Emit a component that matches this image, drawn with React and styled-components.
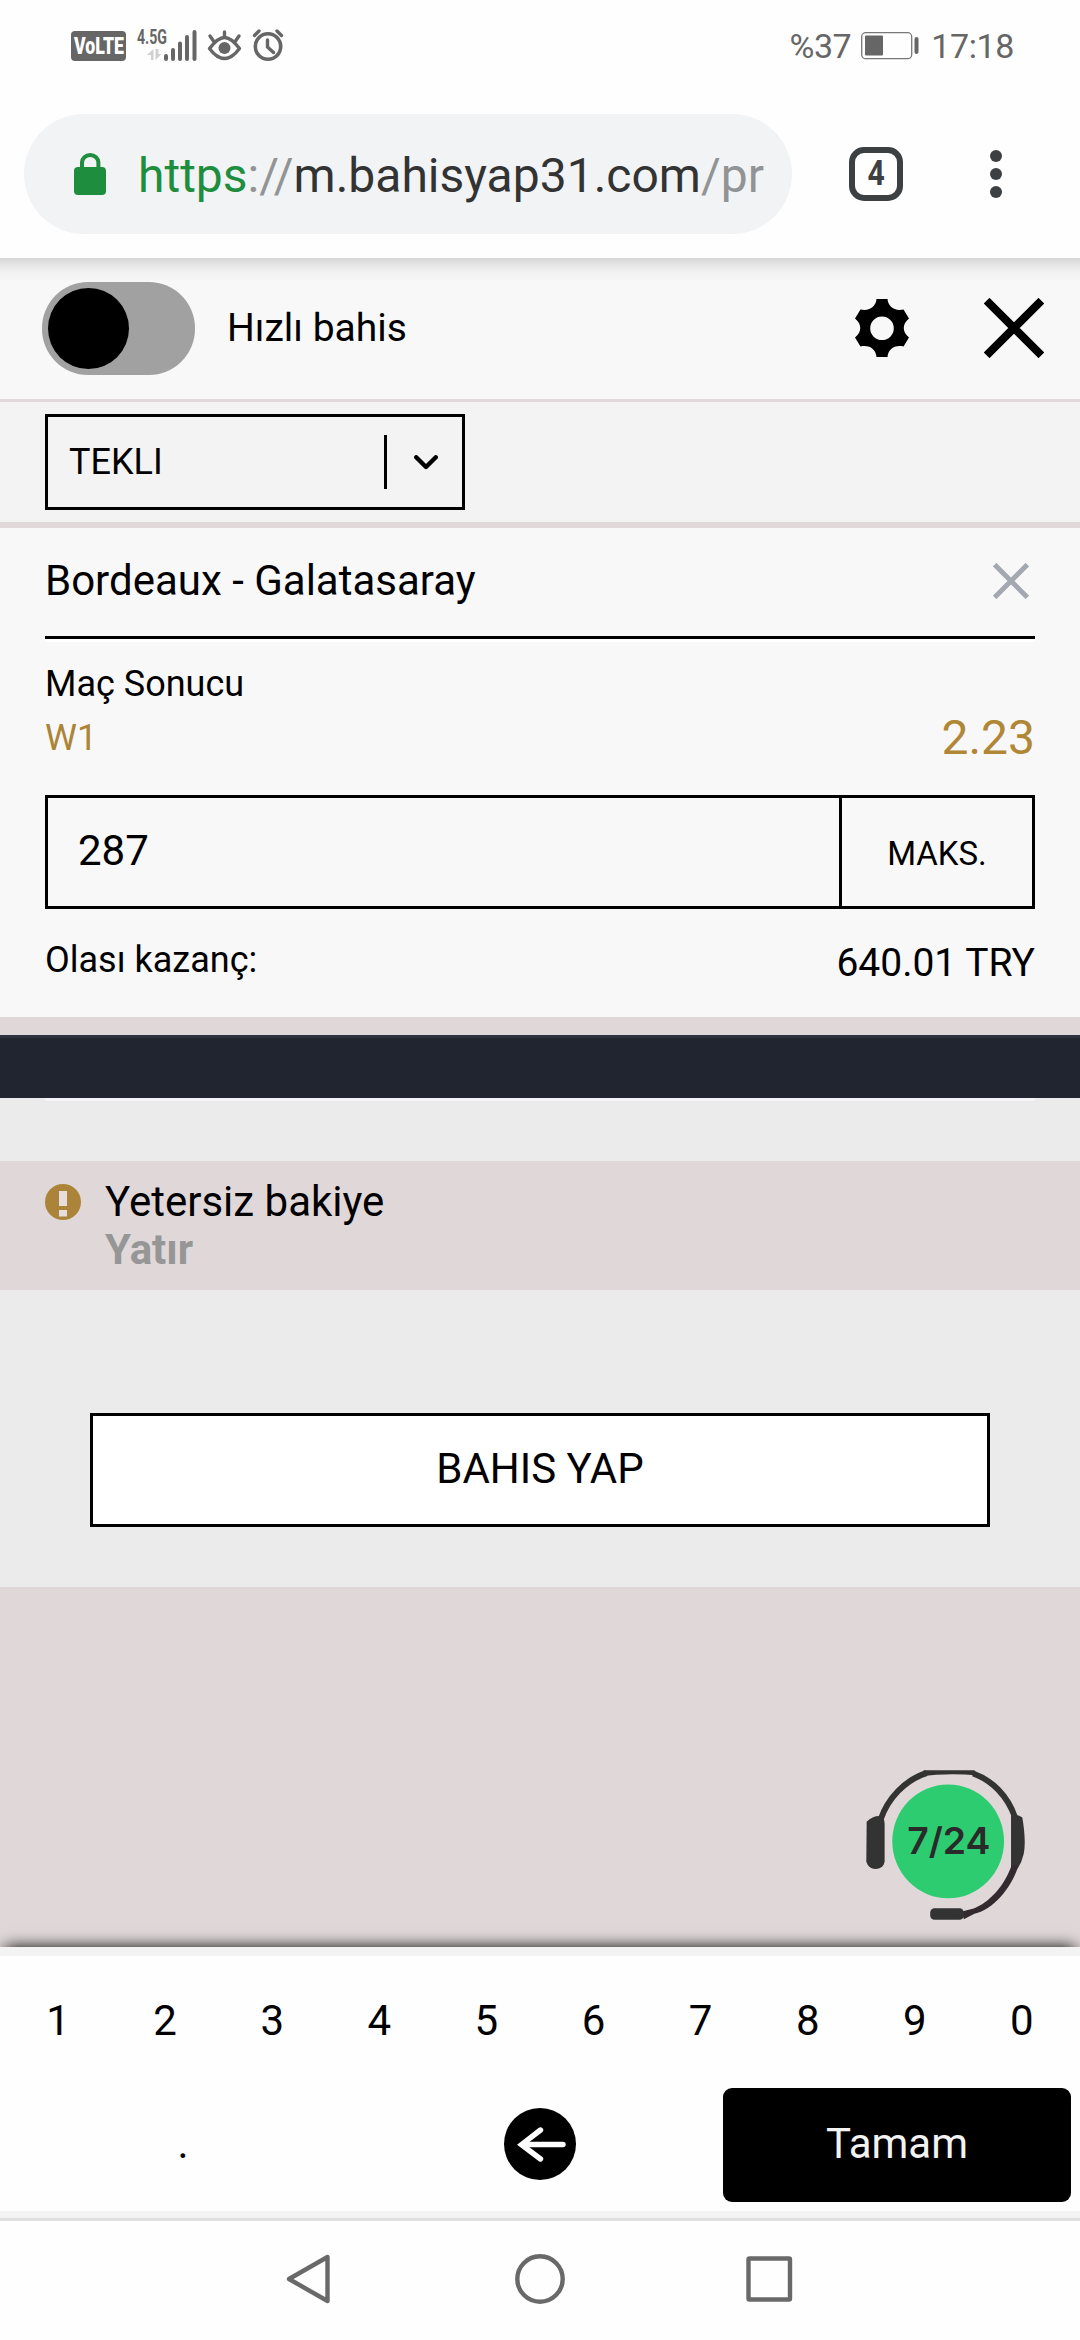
import React from 'react';
import styled, { createGlobalStyle } from 'styled-components';

const GlobalStyle = createGlobalStyle`
    * {
        box-sizing: border-box;
    }
    body {
        margin: 0;
        background-color: #fefefe;
        color: #000;
        font-family: Roboto, 'Liberation Sans', sans-serif;
        font-size: 42px;
    }
    button {
        margin: 0;
        padding: 0;
        border: 0;
        background: none;
        color: inherit;
        font-family: inherit;
    }
    svg {
        display: block;
        flex: none;
    }
`;

const Page = styled.div`
    display: flex;
    flex-direction: column;
    width: 1080px;
    height: 2340px;
    overflow: hidden;
    background-color: #e0d8d8;
`;

/* phone status bar */

const StatusBar = styled.div`
    display: flex;
    justify-content: space-between;
    height: 92px;
    padding: 0 66px 0 70px;
    background-color: #fefefe;
    color: #666;
`;

const StatusRight = styled.div`
    display: flex;
    align-items: center;
    height: 92px;
    font-size: 34px;
    line-height: 92px;
`;

const Clock = styled.span`
    letter-spacing: -0.4px;
`;

/* browser bar */

const BrowserBar = styled.div`
    display: flex;
    align-items: center;
    height: 166px;
    padding: 0 78px 2px 24px;
    background-color: #fefefe;
`;

const AddressPill = styled.div`
    display: flex;
    align-items: center;
    width: 768px;
    height: 120px;
    padding: 0 29px 0 50px;
    border-radius: 60px;
    background-color: #f1f3f4;
`;

const Url = styled.div`
    flex: 1;
    margin-left: 32px;
    padding-top: 3px;
    white-space: nowrap;
    font-size: 48px;
    line-height: 64px;
    color: #333;
`;

const UrlPart = styled.span`
    color: ${props => props.$secure ? '#1e8e3e' : '#919395'};
`;

const TabCount = styled.button`
    display: flex;
    align-items: center;
    justify-content: center;
    width: 54px;
    height: 54px;
    margin-left: 57px;
    border: 6px solid #3c4043;
    border-radius: 15px;
    color: #3c4043;
`;

const TabNumber = styled.span`
    font-size: 35px;
    font-weight: 700;
    line-height: 42px;
    transform: scaleX(0.86);
`;

const MenuDots = styled.button`
    display: flex;
    flex-direction: column;
    gap: 6px;
    margin-left: 87px;
`;

const Dot = styled.span`
    width: 12px;
    height: 12px;
    border-radius: 50%;
    background-color: #3c4043;
`;

/* bet slip */

const SlipHeader = styled.div`
    display: flex;
    align-items: center;
    height: 144px;
    padding: 0 36px 0 42px;
    border-bottom: 3px solid #e0d8d9;
    background: #f8f8f8 linear-gradient(#d6d6d6, #e4e4e4 6px, #f1f1f1 14px, #f8f8f8 24px);
`;

const Toggle = styled.div`
    width: 153px;
    height: 93px;
    padding: 6px;
    border-radius: 46px;
    background-color: #a1a1a1;
`;

const Knob = styled.div`
    width: 81px;
    height: 81px;
    border-radius: 50%;
    background-color: #000;
`;

const ToggleLabel = styled.div`
    flex: 1;
    margin-left: 32px;
    padding-bottom: 2px;
    font-size: 39px;
    line-height: 48px;
`;

const IconButton = styled.button`
    margin-left: ${props => props.$gap || 0}px;
    padding-bottom: ${props => props.$lift || 0}px;
`;

const TypeRow = styled.div`
    height: 126px;
    padding: 12px 45px 0;
    border-bottom: 6px solid #e0d8d9;
    background-color: #f3f3f3;
`;

const Select = styled.div`
    display: flex;
    align-items: center;
    width: 420px;
    height: 96px;
    padding: 0 24px 0 21px;
    border: 3px solid #000;
    font-size: 36px;
`;

const SelectValue = styled.span`
    flex: 1;
`;

const SelectArrow = styled.span`
    display: flex;
    align-items: center;
    height: 54px;
    padding-left: 27px;
    border-left: 3px solid #000;
`;

const Card = styled.div`
    height: 489px;
    padding: 0 45px;
    background-color: #f8f8f8;
`;

const MatchRow = styled.div`
    display: flex;
    align-items: center;
    justify-content: space-between;
    height: 111px;
    padding: 0 6px 3px 0;
    border-bottom: 3px solid #000;
    box-shadow: 0 3px 0 #fff;
`;

const Market = styled.div`
    padding-top: 18px;
    font-size: 36px;
    line-height: 54px;
`;

const Pick = styled.div`
    display: flex;
    justify-content: space-between;
    color: #ab8437;
`;

const Odds = styled.span`
    color: #b08736;
    font-size: 48px;
`;

const StakeBox = styled.div`
    display: flex;
    height: 114px;
    margin-top: 30px;
    border: 3px solid #000;
`;

const StakeInput = styled.input`
    flex: 1;
    min-width: 0;
    padding: 0 30px 3px;
    border: 0;
    outline: 0;
    background: none;
    color: #000;
    font-family: inherit;
    font-size: 42px;
`;

const MaxButton = styled.button`
    width: 193px;
    padding-top: 3px;
    border-left: 3px solid #000;
    font-size: 33px;
`;

const PayoutRow = styled.div`
    display: flex;
    justify-content: space-between;
    padding-top: 27px;
    font-size: 36px;
    line-height: 48px;
`;

const Payout = styled.span`
    padding-top: 3px;
    font-size: 39px;
`;

const Divider = styled.div`
    height: 63px;
    margin-top: 18px;
    border-top: 3px solid #2e323e;
    background-color: #212530;
`;

const Summary = styled.div`
    background-color: #ebebeb;
`;

const SummaryTop = styled.div`
    height: 63px;
    margin: 0 45px;
    border-top: 3px solid #f5f3f8;
`;

const Alert = styled.div`
    display: flex;
    align-items: flex-start;
    gap: 24px;
    height: 129px;
    padding: 17px 45px 0;
    background-color: #e0d8d8;
    line-height: 48px;

    svg {
        margin-top: 6px;
    }
`;

const DepositLink = styled.div`
    color: #969696;
    font-weight: 700;
`;

const SubmitArea = styled.div`
    padding: 123px 90px 60px;
`;

const SubmitButton = styled.button`
    width: 100%;
    height: 114px;
    padding-bottom: 3px;
    border: 3px solid #000;
    background-color: #fff;
    font-size: 42px;
`;

const Spacer = styled.div`
    position: relative;
    flex: 1;
`;

const SupportBadge = styled.div`
    position: absolute;
    right: 53px;
    bottom: 27px;
`;

/* number pad */

const Keypad = styled.div`
    display: flex;
    flex-direction: column;
    gap: 9px;
    height: 271px;
    padding: 9px;
    border-top: 9px solid #f3f3f3;
    border-bottom: 7px solid #f3f3f3;
    background-color: #fefefe;
    box-shadow: 0 -5px 15px -5px #000;
    clip-path: inset(-30px 0 0 0);
`;

const KeyRow = styled.div`
    display: flex;
    gap: 9px;
    height: 114px;
`;

const Key = styled.button`
    display: flex;
    flex: 1;
    align-items: center;
    justify-content: center;
    padding-bottom: 3px;
    border-radius: 9px;
    background-color: ${props => props.$primary ? '#000' : 'transparent'};
    color: ${props => props.$primary ? '#f3f3f3' : '#000'};
    font-size: 42px;
`;

const NavBar = styled.div`
    display: flex;
    align-items: center;
    justify-content: center;
    gap: 180px;
    height: 122px;
    padding-bottom: 3px;
    border-top: 3px solid #dfdfdf;
    background-color: #fefefe;
`;

const keys = ['1', '2', '3', '4', '5', '6', '7', '8', '9', '0'];

const StatusIcons = () => (
    <svg width="220" height="92" viewBox="70 0 220 92" fill="none" stroke="#666">
        <rect x="71" y="31" width="55" height="30" rx="4" fill="#666" stroke="none" />
        <text x="74" y="54" fontSize="23" fontWeight="900" fill="#fff" stroke="none" textLength="50" lengthAdjust="spacingAndGlyphs">VoLTE</text>
        <text x="137" y="43.5" fontSize="20" fontWeight="700" fill="#666" stroke="none" textLength="30" lengthAdjust="spacingAndGlyphs">4.5G</text>
        <path d="M153.500 60V49l-6.500 6h4v5zM155.500 49v11l6-6h-3v-5z" fill="#d0d0d0" stroke="none" />
        <path d="M166 56v3M173 50v9M180 43.500v15.500M187 37v22M194.500 32v27" strokeWidth="4" strokeLinecap="round" />
        <path d="M209.500 48.500C216 40 220 37.500 224.500 37.500S233 40 239.500 48.500C234 56 229.500 58.500 224.500 58.500S215 56 209.500 48.500Z" strokeWidth="3.400" strokeLinejoin="round" />
        <circle cx="224.500" cy="48" r="6" fill="#666" stroke="none" />
        <path d="M224.500 32v5M210 36l3.500 5M239 36l-3.500 5" strokeWidth="3.400" strokeLinecap="round" />
        <circle cx="268" cy="46.500" r="12.700" strokeWidth="3.600" />
        <path d="M267.500 40v7l6 5.500M254.500 35.500l4.500-4.500M281.500 35.500l-4.500-4.500" strokeWidth="3.400" strokeLinecap="round" />
    </svg>
);

const BatteryIcon = () => (
    <svg width="80" height="32" viewBox="852 30 80 32" fill="#666">
        <rect x="862.700" y="32.700" width="50" height="26" rx="4" fill="none" stroke="#777" strokeWidth="1.300" />
        <rect x="866" y="35.500" width="18" height="20" rx="1" />
        <rect x="915.500" y="37" width="4" height="17" rx="2" />
    </svg>
);

const LockIcon = () => (
    <svg width="32" height="42" viewBox="0 0 32 42">
        <path d="M8 16V9.500a8.200 7.500 0 0 1 16.400 0V16" fill="none" stroke="#1e8e3e" strokeWidth="4" />
        <rect y="14" width="32" height="28" rx="4" fill="#1e8e3e" />
    </svg>
);

const GearIcon = () => (
    <svg width="54" height="58" viewBox="0 0 54 58">
        <path
            d="M21.500 0h11C33 7 39 12.500 48.500 10.500L54 19.500C47 25 47 33 54 38.500L48.500 47.500C39 45.500 33 51 32.500 58h-11C21 51 15 45.500 5.500 47.500L0 38.500C7 33 7 25 0 19.500L5.500 10.500C15 12.500 21 7 21.500 0ZM27 17.500a11.800 11.800 0 1 0 0 23.600a11.800 11.800 0 1 0 0-23.600Z"
            fillRule="evenodd"
        />
    </svg>
);

const CrossIcon = ({ size, color, weight }) => (
    <svg width={size} height={size} viewBox={`0 0 ${size} ${size}`}>
        <path
            d={`M${weight / 3} ${weight / 3}L${size - weight / 3} ${size - weight / 3}M${size - weight / 3} ${weight / 3}L${weight / 3} ${size - weight / 3}`}
            stroke={color}
            strokeWidth={weight}
        />
    </svg>
);

const ChevronIcon = () => (
    <svg width="24" height="15" viewBox="0 0 24 15">
        <path d="M2.200 2.300L12 12L21.800 2.300" fill="none" stroke="#000" strokeWidth="4.400" strokeLinecap="round" strokeLinejoin="round" />
    </svg>
);

const WarningIcon = () => (
    <svg width="36" height="36" viewBox="0 0 36 36">
        <circle cx="18" cy="18" r="18" fill="#ab8439" />
        <path d="M14 7h8v15h-8zM14 26h8v6.500h-8z" fill="#e6dedc" />
    </svg>
);

const HeadsetIcon = () => (
    <svg width="163" height="150" viewBox="190 120 490 450">
        <path d="M240 268C262 205 312 150 378 129M518 130C575 150 622 198 644 262" fill="none" stroke="#333" strokeWidth="18" />
        <path d="M370 120H522L532 136Q445 128 360 138Z" fill="#333" />
        <path d="M198 275Q215 258 236 258Q252 260 252 280V395Q248 417 224 417Q204 417 197 395Z" fill="#333" />
        <path d="M632 258Q650 250 666 262Q678 335 670 372Q664 398 652 416L632 418Z" fill="#333" />
        <path d="M654 408C632 476 580 538 522 552L490 568L484 545L520 536C565 518 612 470 634 405Z" fill="#332a30" />
        <rect x="389" y="535" width="101" height="35" rx="13" fill="#333" />
        <ellipse cx="443" cy="334" rx="168" ry="171" fill="#2ecc71" />
        <text x="320" y="373" fontFamily="Inter, sans-serif" fontSize="110" fontWeight="600" fill="#2a2a2a" textLength="250" lengthAdjust="spacingAndGlyphs">7/24</text>
    </svg>
);

const BackspaceIcon = () => (
    <svg width="72" height="72" viewBox="0 0 72 72">
        <circle cx="36" cy="36" r="36" />
        <path d="M36.500 22L17.500 36.700L36.500 51" fill="none" stroke="#fefefe" strokeWidth="5.400" strokeLinecap="round" strokeLinejoin="miter" />
        <path d="M19 36.500H59" stroke="#fefefe" strokeWidth="5.400" strokeLinecap="round" />
    </svg>
);

const NavIcon = ({ children }) => (
    <svg width="50" height="50" viewBox="0 0 50 50" fill="none" stroke="#696969" strokeWidth="4.400" strokeLinejoin="round">
        {children}
    </svg>
);

const App = () => (
    <Page>
        <GlobalStyle />
        <StatusBar>
            <StatusIcons />
            <StatusRight>
                <Clock>%37</Clock>
                <BatteryIcon />
                <Clock>17:18</Clock>
            </StatusRight>
        </StatusBar>
        <BrowserBar>
            <AddressPill>
                <LockIcon />
                <Url>
                    <UrlPart $secure>https</UrlPart>
                    <UrlPart>://</UrlPart>
                    m.bahisyap31.com
                    <UrlPart>/pr</UrlPart>
                </Url>
            </AddressPill>
            <TabCount><TabNumber>4</TabNumber></TabCount>
            <MenuDots>
                <Dot />
                <Dot />
                <Dot />
            </MenuDots>
        </BrowserBar>

        <SlipHeader>
            <Toggle><Knob /></Toggle>
            <ToggleLabel>Hızlı bahis</ToggleLabel>
            <IconButton $lift={2}><GearIcon /></IconButton>
            <IconButton $gap={75} $lift={2}><CrossIcon size={60} color="#000" weight={8} /></IconButton>
        </SlipHeader>
        <TypeRow>
            <Select>
                <SelectValue>TEKLI</SelectValue>
                <SelectArrow><ChevronIcon /></SelectArrow>
            </Select>
        </TypeRow>

        <Card>
            <MatchRow>
                <span>Bordeaux - Galatasaray</span>
                <IconButton><CrossIcon size={36} color="#a4a8b0" weight={5} /></IconButton>
            </MatchRow>
            <Market>
                <div>Maç Sonucu</div>
                <Pick>
                    <span>W1</span>
                    <Odds>2.23</Odds>
                </Pick>
            </Market>
            <StakeBox>
                <StakeInput defaultValue="287" />
                <MaxButton>MAKS.</MaxButton>
            </StakeBox>
            <PayoutRow>
                <span>Olası kazanç:</span>
                <Payout>640.01 TRY</Payout>
            </PayoutRow>
        </Card>
        <Divider />

        <Summary>
            <SummaryTop />
            <Alert>
                <WarningIcon />
                <div>
                    <div>Yetersiz bakiye</div>
                    <DepositLink>Yatır</DepositLink>
                </div>
            </Alert>
            <SubmitArea>
                <SubmitButton>BAHIS YAP</SubmitButton>
            </SubmitArea>
        </Summary>
        <Spacer>
            <SupportBadge><HeadsetIcon /></SupportBadge>
        </Spacer>

        <Keypad>
            <KeyRow>
                {keys.map(key => <Key key={key}>{key}</Key>)}
            </KeyRow>
            <KeyRow>
                <Key>.</Key>
                <Key><BackspaceIcon /></Key>
                <Key $primary>Tamam</Key>
            </KeyRow>
        </Keypad>
        <NavBar>
            <NavIcon><path d="M42.500 3V47L4 25Z" /></NavIcon>
            <NavIcon><circle cx="25" cy="25" r="22.700" /></NavIcon>
            <NavIcon><rect x="3.500" y="4.500" width="41.500" height="41" rx="1" /></NavIcon>
        </NavBar>
    </Page>
);

export default App;
